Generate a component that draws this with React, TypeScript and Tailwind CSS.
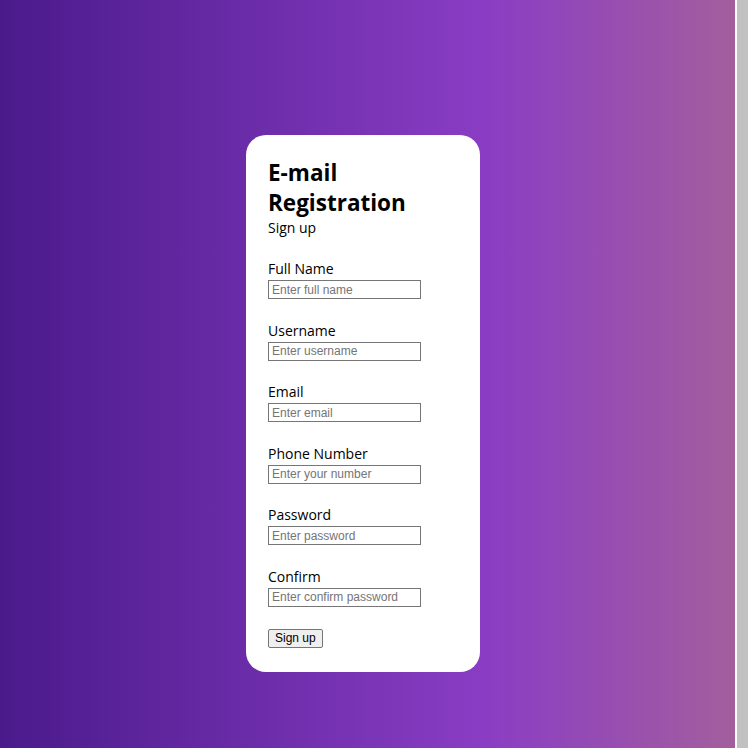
export default function App() {
  const fields = [
    { label: 'Full Name', placeholder: 'Enter full name', type: 'text' },
    { label: 'Username', placeholder: 'Enter username', type: 'text' },
    { label: 'Email', placeholder: 'Enter email', type: 'email' },
    { label: 'Phone Number', placeholder: 'Enter your number', type: 'tel' },
    { label: 'Password', placeholder: 'Enter password', type: 'password' },
    { label: 'Confirm', placeholder: 'Enter confirm password', type: 'password' },
  ];

  return (
    <div className="flex h-[748px] w-[748px] overflow-hidden bg-white">
      <main className="h-full w-[735px] bg-[linear-gradient(to_right,#4a1a8b,#8a3dc4_66%,#a35e9e)] pt-[135px] pl-[246px]">
        <div className="w-[234px] h-[537px] rounded-[20px] bg-white px-[22px] pt-[23px] font-['Open_Sans',sans-serif] text-black">
          <h1 className="text-[22.5px] font-bold leading-[29.5px]">E-mail Registration</h1>
          <p className="text-[14px] leading-[22px]">Sign up</p>

          <form className="mt-[19px] flex flex-col gap-[20.6px]">
            {fields.map((f) => (
              <div key={f.label} className="flex flex-col">
                <label className="text-[14px] leading-[22px]">{f.label}</label>
                <input
                  type={f.type}
                  placeholder={f.placeholder}
                  className="h-[19px] w-[153px] border border-[#767676] px-[3px] font-['Liberation_Sans',sans-serif] text-[12px] placeholder:text-[#757575]"
                />
              </div>
            ))}
            <div className="flex pt-[1px]">
              <button
                type="button"
                className="h-[19px] rounded-[2px] border border-[#767676] bg-[#efefef] px-[6px] font-['Liberation_Sans',sans-serif] text-[12px] leading-none"
              >
                Sign up
              </button>
            </div>
          </form>
        </div>
      </main>
      <div className="h-full w-[2px] bg-white" />
      <div className="h-full flex-1 bg-[#c1c1c1]" />
    </div>
  );
}
